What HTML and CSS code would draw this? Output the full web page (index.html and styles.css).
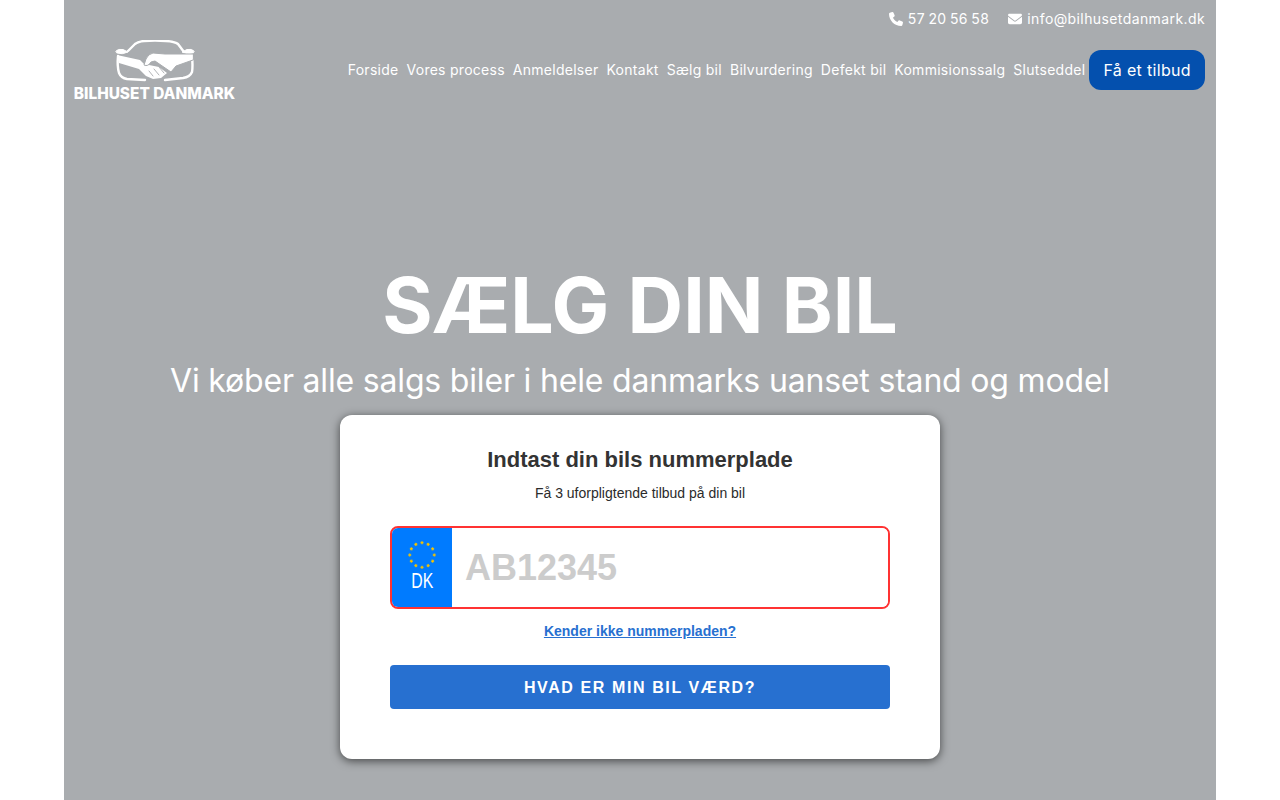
FILE: index.html
```html
<!DOCTYPE html>
<html lang="da">
<head>
  <meta charset="UTF-8" />
  <title>Bilhuset Danmark</title>
  <link rel="stylesheet" href="styles.css">
</head>
<body>
  <div class="page">
    <div class="topbar">
      <a href="#" class="top-link top-phone">
        <svg class="top-icon" viewBox="0 0 512 512"><path d="M164.900 24.600c-7.700-18.600-28-28.500-47.400-23.200l-88 24C12.100 30.200 0 46 0 64C0 311.400 200.600 512 448 512c18 0 33.800-12.100 38.600-29.500l24-88c5.300-19.400-4.600-39.700-23.200-47.400l-96-40c-16.300-6.800-35.200-2.100-46.300 11.600L304.700 368C234.300 334.700 177.300 277.700 144 207.300L193.300 167c13.700-11.200 18.400-30 11.600-46.300l-40-96z"/></svg>
        57 20 56 58
      </a>
      <a href="#" class="top-link">
        <svg class="top-icon" viewBox="0 0 512 512"><path d="M48 64C21.500 64 0 85.500 0 112c0 15.100 7.100 29.300 19.200 38.400L236.800 313.600c11.400 8.500 27 8.500 38.400 0L492.800 150.400c12.100-9.100 19.200-23.300 19.200-38.400c0-26.500-21.500-48-48-48H48zM0 176V384c0 35.300 28.700 64 64 64H448c35.300 0 64-28.700 64-64V176L294.400 339.200c-22.800 17.100-54 17.100-76.800 0L0 176z"/></svg>
        info@bilhusetdanmark.dk
      </a>
    </div>

    <header class="header">
      <a href="#" class="logo">
        <svg class="logo-mark" viewBox="0 0 80 42" fill="none" stroke="#fff" stroke-linecap="round" stroke-linejoin="round">
          <!-- roof -->
          <path d="M13 11 L20 4 Q23 1.500 29 1 Q40 0 51 1 Q60 1.500 63 4 L69 12" stroke-width="2.400"/>
          <!-- body -->
          <path d="M3 16 Q2 26 4 33 Q6 38 12 39 L30 40 M77 17 Q78 26 77 32 Q75 37 68 38 L50 40" stroke-width="2.400"/>
          <!-- mirrors -->
          <path d="M1 11 Q3 8.500 8 9.500 L13 12 Q7 15 2 13Z M79 11 Q77 8.500 72 9.500 L67 12 Q73 15 78 13Z" fill="#fff" stroke-width="1"/>
          <!-- arms and hands -->
          <path d="M2 15 L25 20 L29 24 L44 27 L52 33 L46 38 L38 39 L31 36 L24 29 L4 23Z" fill="#fff" stroke="none"/>
          <path d="M78 14 L50 14 L38 13 Q33 14 31 19 L29 25 Q33 27 36 22 L40 21 L56 32 L61 26 L78 20Z" fill="#fff" stroke="#a9acaf" stroke-width="1"/>
          <path d="M44 27 L49 33 M39 29 L44 35 M34 31 L38 36" stroke="#a9acaf" stroke-width="0.900"/>
        </svg>
        <span class="logo-text">BILHUSET DANMARK</span>
      </a>
      <nav class="nav">
        <a href="#">Forside</a>
        <a href="#">Vores process</a>
        <a href="#">Anmeldelser</a>
        <a href="#">Kontakt</a>
        <a href="#">Sælg bil</a>
        <a href="#">Bilvurdering</a>
        <a href="#">Defekt bil</a>
        <a href="#">Kommisionssalg</a>
        <a href="#">Slutseddel</a>
        <a href="#" class="offer-btn">Få et tilbud</a>
      </nav>
    </header>

    <section class="hero">
      <h1>SÆLG DIN BIL</h1>
      <p class="hero-sub">Vi køber alle salgs biler i hele danmarks uanset stand og model</p>

      <form class="card">
        <h2>Indtast din bils nummerplade</h2>
        <p class="card-sub">Få 3 uforpligtende tilbud på din bil</p>
        <div class="plate">
          <div class="plate-eu">
            <svg class="eu-stars" viewBox="0 0 28 28" fill="#f5c400" stroke="#f5c400" stroke-width="0.400">
              <path d="M14 0 L14.500 1.100 L15.600 1.200 L14.800 2 L15 3.100 L14 2.600 L13 3.100 L13.200 2 L12.400 1.200 L13.500 1.100Z"/>
              <path transform="rotate(30 14 14)" d="M14 0 L14.500 1.100 L15.600 1.200 L14.800 2 L15 3.100 L14 2.600 L13 3.100 L13.200 2 L12.400 1.200 L13.500 1.100Z"/>
              <path transform="rotate(60 14 14)" d="M14 0 L14.500 1.100 L15.600 1.200 L14.800 2 L15 3.100 L14 2.600 L13 3.100 L13.200 2 L12.400 1.200 L13.500 1.100Z"/>
              <path transform="rotate(90 14 14)" d="M14 0 L14.500 1.100 L15.600 1.200 L14.800 2 L15 3.100 L14 2.600 L13 3.100 L13.200 2 L12.400 1.200 L13.500 1.100Z"/>
              <path transform="rotate(120 14 14)" d="M14 0 L14.500 1.100 L15.600 1.200 L14.800 2 L15 3.100 L14 2.600 L13 3.100 L13.200 2 L12.400 1.200 L13.500 1.100Z"/>
              <path transform="rotate(150 14 14)" d="M14 0 L14.500 1.100 L15.600 1.200 L14.800 2 L15 3.100 L14 2.600 L13 3.100 L13.200 2 L12.400 1.200 L13.500 1.100Z"/>
              <path transform="rotate(180 14 14)" d="M14 0 L14.500 1.100 L15.600 1.200 L14.800 2 L15 3.100 L14 2.600 L13 3.100 L13.200 2 L12.400 1.200 L13.500 1.100Z"/>
              <path transform="rotate(210 14 14)" d="M14 0 L14.500 1.100 L15.600 1.200 L14.800 2 L15 3.100 L14 2.600 L13 3.100 L13.200 2 L12.400 1.200 L13.500 1.100Z"/>
              <path transform="rotate(240 14 14)" d="M14 0 L14.500 1.100 L15.600 1.200 L14.800 2 L15 3.100 L14 2.600 L13 3.100 L13.200 2 L12.400 1.200 L13.500 1.100Z"/>
              <path transform="rotate(270 14 14)" d="M14 0 L14.500 1.100 L15.600 1.200 L14.800 2 L15 3.100 L14 2.600 L13 3.100 L13.200 2 L12.400 1.200 L13.500 1.100Z"/>
              <path transform="rotate(300 14 14)" d="M14 0 L14.500 1.100 L15.600 1.200 L14.800 2 L15 3.100 L14 2.600 L13 3.100 L13.200 2 L12.400 1.200 L13.500 1.100Z"/>
              <path transform="rotate(330 14 14)" d="M14 0 L14.500 1.100 L15.600 1.200 L14.800 2 L15 3.100 L14 2.600 L13 3.100 L13.200 2 L12.400 1.200 L13.500 1.100Z"/>
            </svg>
            <span class="plate-dk">DK</span>
          </div>
          <input class="plate-input" type="text" placeholder="AB12345" />
        </div>
        <a href="#" class="plate-help">Kender ikke nummerpladen?</a>
        <button type="button" class="value-btn">HVAD ER MIN BIL VÆRD?</button>
      </form>
    </section>
  </div>
</body>
</html>
```

FILE: styles.css
```css
* {
  margin: 0;
  padding: 0;
  box-sizing: border-box;
}

body {
  background: #fff;
  font-family: 'Inter', 'Open Sans', sans-serif;
  color: #fff;
}

a {
  color: inherit;
  text-decoration: none;
}

.page {
  width: 1152px;
  height: 800px;
  margin: 0 auto;
  background: #a9acaf;
  overflow: hidden;
}

.topbar {
  display: flex;
  justify-content: flex-end;
  gap: 19px;
  height: 34px;
  padding: 3px 11px 0 0;
  font-size: 14px;
  line-height: 18px;
  letter-spacing: 0.4px;
}

.top-link {
  display: flex;
  align-items: center;
  gap: 5px;
}

.top-phone {
  word-spacing: -1px;
}

.top-icon {
  width: 14px;
  height: 14px;
  fill: #fff;
}

.header {
  display: flex;
  justify-content: space-between;
  align-items: center;
  height: 72px;
  padding: 0 11px 0 10px;
}

.logo {
  display: flex;
  flex-direction: column;
  align-items: center;
  width: 161px;
  margin-top: 2px;
}

.logo-mark {
  width: 80px;
  height: 42px;
}

.logo-text {
  margin-top: 3px;
  font-size: 15.4px;
  line-height: 17px;
  font-weight: 800;
  white-space: nowrap;
}

.nav {
  display: flex;
  align-items: center;
  gap: 8px;
  font-size: 14px;
  letter-spacing: 0.27px;
}

.nav a {
  padding-bottom: 2px;
}

.nav .offer-btn {
  margin-left: -4px;
  padding: 0 14px;
  height: 40px;
  line-height: 40px;
  border-radius: 12px;
  background: #0450ae;
  font-size: 16px;
  letter-spacing: 0.33px;
}

.hero {
  display: flex;
  flex-direction: column;
  align-items: center;
  padding-top: 151px;
}

h1 {
  font-size: 77px;
  line-height: 96px;
  font-weight: 700;
}

.hero-sub {
  margin-top: 4px;
  font-size: 32px;
  line-height: 48px;
  letter-spacing: -0.18px;
}

.card {
  display: flex;
  flex-direction: column;
  align-items: center;
  width: 600px;
  height: 344px;
  margin-top: 10px;
  padding: 31px 50px 30px;
  background: #fff;
  border-radius: 12px;
  box-shadow: 0 2px 10px rgba(0, 0, 0, 0.6);
  font-family: 'Liberation Sans', Arial, sans-serif;
  color: #2b2b2b;
}

.card h2 {
  font-size: 22px;
  line-height: 28px;
  color: #333;
}

.card-sub {
  margin-top: 9px;
  font-size: 14px;
  line-height: 20px;
}

.plate {
  display: flex;
  width: 100%;
  height: 83px;
  margin-top: 23px;
  border: 2px solid #f33;
  border-radius: 8px;
  overflow: hidden;
}

.plate-eu {
  display: flex;
  flex-direction: column;
  align-items: center;
  width: 60px;
  flex-shrink: 0;
  padding-top: 13px;
  background: #007bff;
}

.eu-stars {
  width: 28px;
  height: 28px;
}

.plate-dk {
  font-family: 'Liberation Sans', Arial, sans-serif;
  font-size: 22px;
  line-height: 24px;
  color: #fff;
  transform: scaleX(0.72);
}

.plate-input {
  flex: 1;
  min-width: 0;
  padding: 0 13px;
  border: none;
  outline: none;
  font-family: 'Liberation Sans', Arial, sans-serif;
  font-size: 36px;
  font-weight: 700;
  color: #222;
}

.plate-input::placeholder {
  color: #ccc;
  opacity: 1;
}

.plate-help {
  margin-top: 13px;
  font-size: 14px;
  line-height: 18px;
  font-weight: 700;
  color: #2770d0;
  text-decoration: underline;
}

.value-btn {
  width: 100%;
  height: 44px;
  margin-top: 25px;
  padding-top: 1px;
  border: none;
  border-radius: 4px;
  background: #2770d0;
  font-family: 'Liberation Sans', Arial, sans-serif;
  font-size: 16px;
  font-weight: 700;
  letter-spacing: 1.6px;
  color: #fff;
  cursor: pointer;
}
```
